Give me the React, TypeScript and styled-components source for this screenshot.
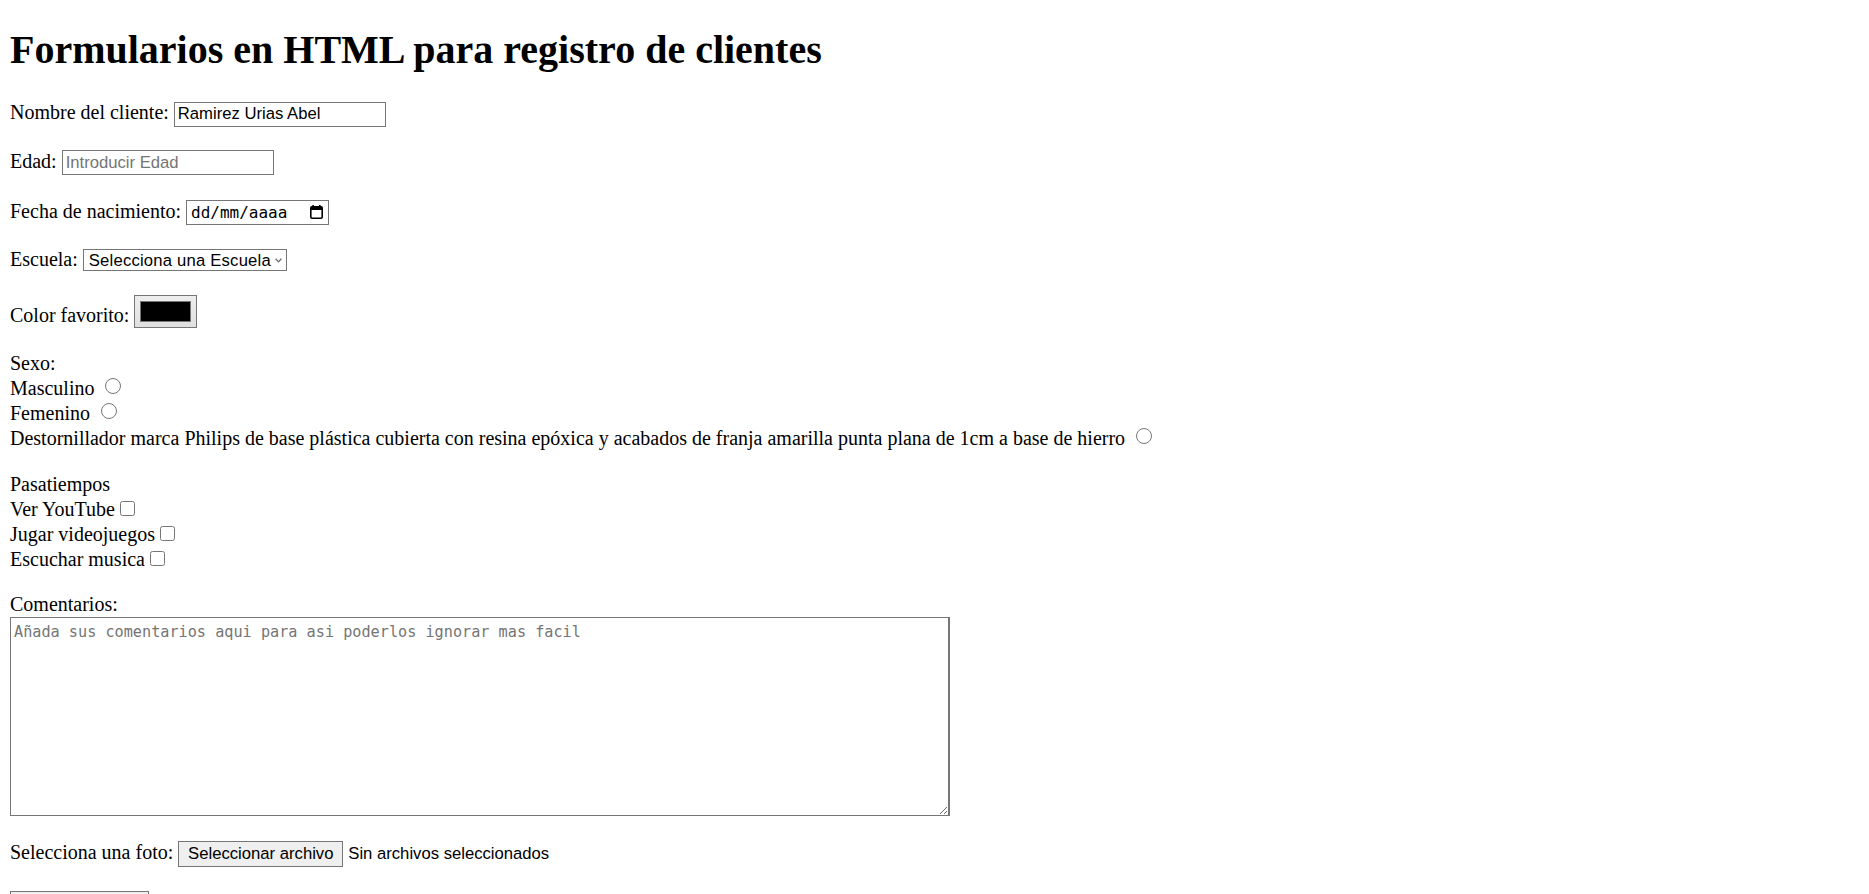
import React from "react";
import styled, { createGlobalStyle } from "styled-components";

const GlobalStyle = createGlobalStyle`
  html, body {
    margin: 0;
    padding: 0;
    background: #fff;
  }
  body {
    font-family: "Liberation Serif", "Times New Roman", serif;
    font-size: 20px;
    color: #000;
  }
  ::-webkit-scrollbar {
    width: 15px;
  }
  ::-webkit-scrollbar-track {
    background: #fff;
  }
  ::-webkit-scrollbar-thumb {
    background: #cfd9e3;
    background-clip: padding-box;
    border: 4px solid #fff;
    border-left-width: 5px;
    border-radius: 8px;
  }
  ::-webkit-scrollbar-button:single-button {
    display: block;
    height: 17px;
    background: #fff;
  }
`;

const Page = styled.div`
  padding: 0 10px 10px;
`;

const Title = styled.h1`
  margin: 26.8px 0 0;
  font-size: 40px;
  line-height: 46px;
  font-weight: bold;
`;

const Form = styled.form`
  display: flex;
  flex-direction: column;
  align-items: flex-start;
`;

const Row = styled.div<{ $mt?: number; $h?: number; $align?: string }>`
  display: flex;
  align-items: ${(p) => p.$align ?? "baseline"};
  height: ${(p) => p.$h ?? 23}px;
  margin-top: ${(p) => p.$mt ?? 0}px;
  white-space: nowrap;
`;

const Label = styled.span`
  line-height: 23px;
`;

const controlFont = `font: 16.67px "Liberation Sans", Arial, sans-serif;`;

const TextInput = styled.input`
  box-sizing: border-box;
  width: 212px;
  height: 25px;
  margin: 0 0 0 5px;
  padding: 1px 3px;
  border: 1px solid #767676;
  border-radius: 0;
  background: #fff;
  color: #000;
  ${controlFont}
  &::placeholder {
    color: #757575;
  }
  &::-webkit-inner-spin-button,
  &::-webkit-outer-spin-button {
    -webkit-appearance: none;
    margin: 0;
  }
`;

const DateField = styled.span`
  display: inline-flex;
  align-items: center;
  justify-content: space-between;
  box-sizing: border-box;
  width: 143px;
  height: 25px;
  margin-left: 5px;
  padding: 0 5px 0 4px;
  border: 1px solid #767676;
  font: 16px "DejaVu Sans Mono", "Liberation Mono", monospace;
  line-height: 19px;
  color: #000;
`;

const CalendarIcon = () => (
  <svg width="13" height="14" viewBox="0 0 13 14" aria-hidden="true">
    <rect x="2.4" y="0" width="1.6" height="2.4" fill="#000" />
    <rect x="9" y="0" width="1.6" height="2.4" fill="#000" />
    <rect x="0.8" y="1.8" width="11.4" height="11.4" rx="1.2" fill="none" stroke="#000" strokeWidth="1.6" />
    <rect x="0.8" y="1.8" width="11.4" height="3.2" fill="#000" />
  </svg>
);

const SelectBox = styled.span`
  display: inline-flex;
  align-items: center;
  box-sizing: border-box;
  width: 204px;
  height: 22px;
  margin-left: 5px;
  padding-right: 3.5px;
  border: 1px solid #767676;
  background: #fff;
`;

const Select = styled.select`
  flex: 1;
  min-width: 0;
  height: 100%;
  margin: 0;
  padding: 0 0 0 5px;
  border: none;
  outline: none;
  background: transparent;
  appearance: none;
  -webkit-appearance: none;
  color: #000;
  ${controlFont}
  letter-spacing: 0.2px;
`;

const Chevron = () => (
  <svg width="7" height="5" viewBox="0 0 7 5" aria-hidden="true">
    <path d="M0.6 0.8 L3.5 3.9 L6.4 0.8" fill="none" stroke="#6a6a6a" strokeWidth="1.25" />
  </svg>
);

const ColorInput = styled.input`
  box-sizing: border-box;
  width: 63px;
  height: 33px;
  margin: 0 0 7.6px 5px;
  padding: 1px 2px;
  border: 1px solid #767676;
  border-radius: 0;
  background: linear-gradient(#ededed, #e0e0e0);
  &::-webkit-color-swatch-wrapper {
    padding: 4px 3px;
  }
  &::-webkit-color-swatch {
    border: 1px solid #777;
    border-radius: 0;
  }
`;

const Radio = styled.input`
  width: 16px;
  height: 16px;
  margin: 0 0 4.5px 11px;
`;

const Checkbox = styled.input`
  width: 15.5px;
  height: 15.5px;
  margin: 0 0 1.5px 5px;
`;

const CommentBox = styled.textarea`
  display: block;
  box-sizing: border-box;
  width: 940px;
  height: 199px;
  margin: 0.5px 0 0;
  padding: 5px 3px 3px;
  border: 1px solid #767676;
  border-right-width: 2px;
  border-radius: 0;
  color: #000;
  font: 15.2px "DejaVu Sans Mono", "Liberation Mono", monospace;
  line-height: 19px;
  &::placeholder {
    color: #757575;
  }
`;

const FileButton = styled.label`
  display: inline-flex;
  align-items: center;
  justify-content: center;
  box-sizing: border-box;
  width: 165px;
  height: 26px;
  margin-left: 5px;
  border: 1px solid #767676;
  background: #efefef;
  color: #000;
  ${controlFont}
  line-height: 19px;
  input {
    display: none;
  }
`;

const FileStatus = styled.span`
  margin-left: 5px;
  ${controlFont}
`;

const SubmitButton = styled.button`
  box-sizing: border-box;
  width: 139px;
  height: 26px;
  margin-top: 27px;
  border: 1px solid #767676;
  border-radius: 0;
  background: #efefef;
  color: #000;
  ${controlFont}
`;

const genders = [
  "Masculino",
  "Femenino",
  "Destornillador marca Philips de base plástica cubierta con resina epóxica y acabados de franja amarilla punta plana de 1cm a base de hierro",
];

const hobbies = ["Ver YouTube", "Jugar videojuegos", "Escuchar musica"];

export default function App() {
  return (
    <Page>
      <GlobalStyle />
      <Title>Formularios en HTML para registro de clientes</Title>
      <Form onSubmit={(e) => e.preventDefault()}>
        <Row $mt={28.3}>
          <Label>Nombre del cliente:</Label>
          <TextInput type="text" defaultValue="Ramirez Urias Abel" />
        </Row>
        <Row $mt={25.7}>
          <Label>Edad:</Label>
          <TextInput type="number" placeholder="Introducir Edad" />
        </Row>
        <Row $mt={27}>
          <Label>Fecha de nacimiento:</Label>
          <DateField>
            <span>dd/mm/aaaa</span>
            <CalendarIcon />
          </DateField>
        </Row>
        <Row $mt={25}>
          <Label>Escuela:</Label>
          <SelectBox>
            <Select defaultValue="">
              <option value="">Selecciona una Escuela</option>
              <option value="uas">UAS</option>
              <option value="tec">Tecnológico</option>
            </Select>
            <Chevron />
          </SelectBox>
        </Row>
        <Row $mt={33} $align="center">
          <Label>Color favorito:</Label>
          <ColorInput type="color" defaultValue="#000000" />
        </Row>

        <Row $mt={24} $h={25} $align="center">
          <Label>Sexo:</Label>
        </Row>
        {genders.map((g) => (
          <Row key={g} $h={25} $align="center">
            <Label>{g}</Label>
            <Radio type="radio" name="sexo" value={g} />
          </Row>
        ))}

        <Row $mt={21} $h={25} $align="center">
          <Label>Pasatiempos</Label>
        </Row>
        {hobbies.map((h) => (
          <Row key={h} $h={25} $align="center">
            <Label>{h}</Label>
            <Checkbox type="checkbox" name="pasatiempos" value={h} />
          </Row>
        ))}

        <Row $mt={21.5} $align="center">
          <Label>Comentarios:</Label>
        </Row>
        <CommentBox placeholder="Añada sus comentarios aqui para asi poderlos ignorar mas facil" />

        <Row $mt={25}>
          <Label>Selecciona una foto:</Label>
          <FileButton>
            Seleccionar archivo
            <input type="file" accept="image/*" />
          </FileButton>
          <FileStatus>Sin archivos seleccionados</FileStatus>
        </Row>

        <SubmitButton type="submit">Enviar formulario</SubmitButton>
      </Form>
    </Page>
  );
}
